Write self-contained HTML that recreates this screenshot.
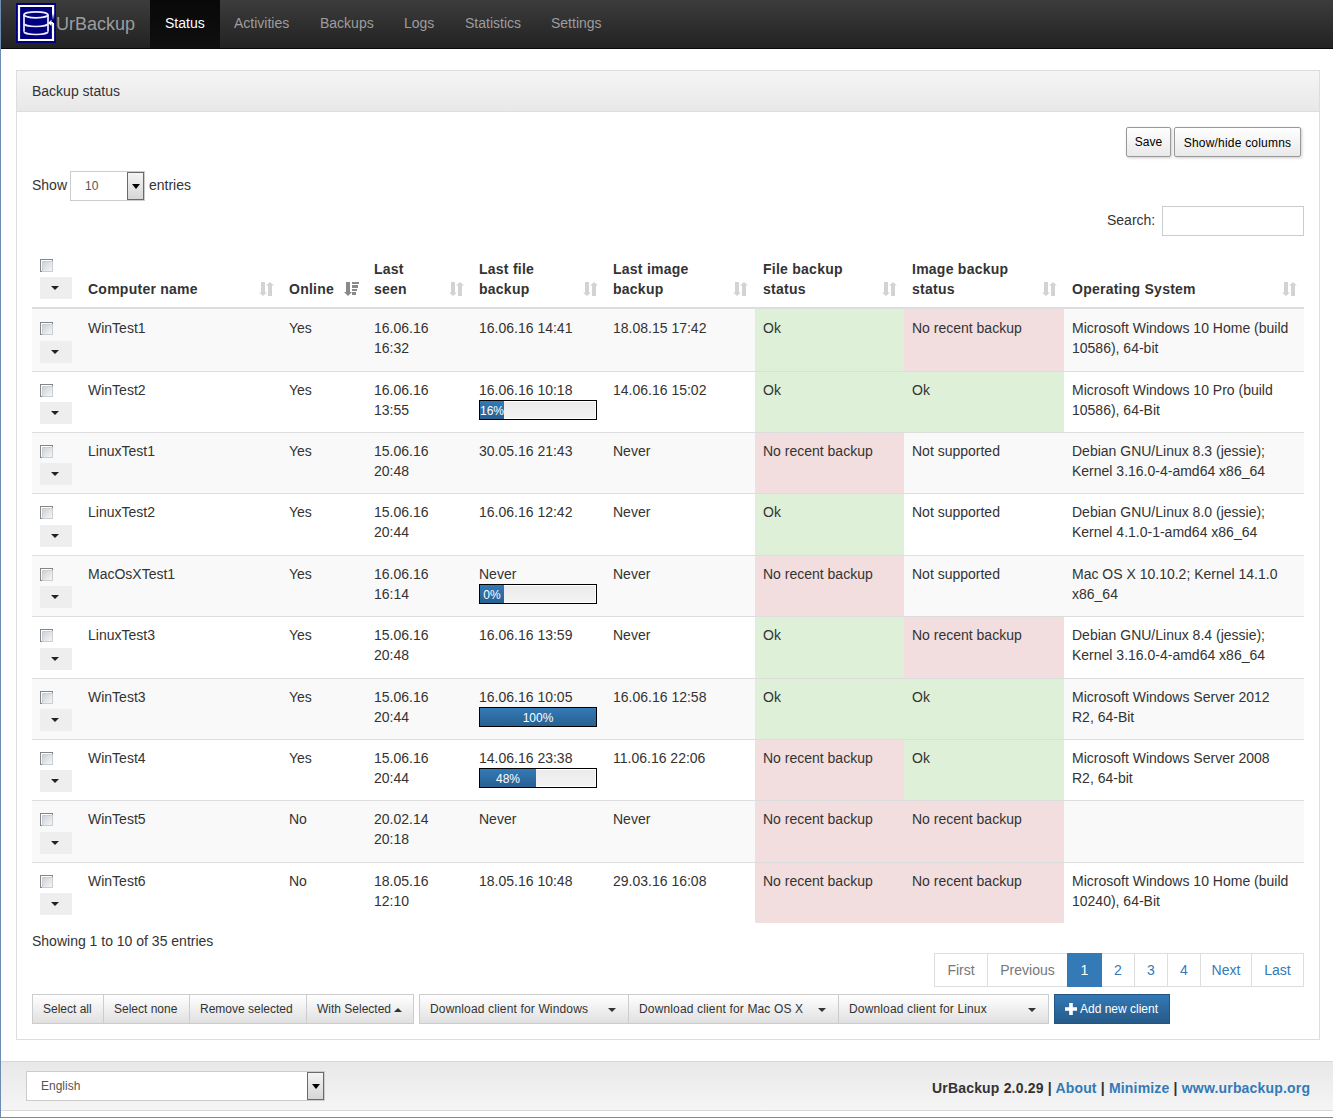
<!DOCTYPE html><html><head><meta charset="utf-8"><title>UrBackup</title><style>
*{box-sizing:border-box}
html,body{margin:0;padding:0}
body{width:1333px;height:1118px;position:relative;overflow:hidden;background:#fff;font-family:"Liberation Sans",sans-serif;font-size:14px;line-height:20px;color:#333}
.a{position:absolute;white-space:nowrap}
#lb{position:absolute;left:0;top:0;width:1px;height:1118px;background:#6b8cb3;z-index:50}
#bb{position:absolute;left:0;top:1117px;width:1333px;height:1px;background:#6b8cb3;z-index:50}
#nav{position:absolute;left:0;top:0;width:1333px;height:49px;background:linear-gradient(#3c3c3c,#222);border-bottom:1px solid #080808}
#nav .brand{position:absolute;left:56px;top:1px;height:48px;line-height:47px;font-size:18px;color:#9d9d9d}
#nav .logo{position:absolute;left:16px;top:3px;width:40px;height:40px}
#nav a{position:absolute;top:0;height:48px;line-height:46px;color:#9d9d9d;text-decoration:none;font-size:14px;padding:0 15px}
#nav a.act{background:linear-gradient(#080808,#0f0f0f);color:#fff}
#panel{position:absolute;left:16px;top:70px;width:1304px;height:970px;border:1px solid #ddd}
#ph{position:absolute;left:0;top:0;width:1302px;height:41px;background:linear-gradient(#f5f5f5,#e8e8e8);border-bottom:1px solid #ddd;padding:10px 15px}
.dtb{position:absolute;top:127px;height:30px;border:1px solid #999;border-radius:2px;background:linear-gradient(#fff,#e9e9e9);box-shadow:1px 1px 3px #ccc;font-size:12px;line-height:28px;text-align:center;color:#000}
.inp{position:absolute;border:1px solid #ccc;background:#fff}
.sel{position:absolute;border:1px solid #ccc;background:#fff;font-size:12px;color:#555}
.selbtn{position:absolute;top:0;right:0;width:17px;border:1px solid #6a6a6a;background:linear-gradient(#f4f4f4,#d6d6d6)}
.selbtn:after{content:"";position:absolute;left:3.5px;top:11px;border-top:5px solid #000;border-left:4px solid transparent;border-right:4px solid transparent}
.th{position:absolute;font-weight:bold;color:#333;letter-spacing:0.25px}
.row{position:absolute;left:32px;width:1272px}
.cb{position:absolute;width:13px;height:13px;border:1px solid #858585;background:#fff}
.cb:after{content:"";position:absolute;left:1px;top:1px;width:9px;height:9px;border:1px solid #c9ced3;background:linear-gradient(135deg,#cdd3d9,#f6f6f6)}
.ddb{position:absolute;width:32px;height:22px;background:#eeeeee}
.ddb:after{content:"";position:absolute;left:11px;top:9px;border-top:4px solid #222;border-left:4px solid transparent;border-right:4px solid transparent}
.sep{position:absolute;left:32px;width:1272px;height:1px;background:#ddd}
.ok{background:#dff0d8}
.bad{background:#f2dede}
.pb{position:absolute;width:118px;height:20px;border:1px solid #000;background:linear-gradient(#ebebeb,#f3f3f3);box-shadow:inset 0 0 0 1px #fff;overflow:hidden}
.pbf{position:absolute;left:0;top:0;height:18px;background:linear-gradient(#337ab7,#286090);color:#fff;font-size:12px;line-height:20px;text-align:center}
.pbtn{position:absolute;top:994px;height:30px;border:1px solid #ccc;background:linear-gradient(#fff,#e0e0e0);font-size:12px;line-height:28px;color:#333;padding:0 10px}
.car{display:inline-block;width:0;height:0;border-top:4px solid #333;border-left:4px solid transparent;border-right:4px solid transparent;vertical-align:middle}
.pg{position:absolute;top:953px;height:34px;border:1px solid #ddd;background:#fff;color:#337ab7;line-height:32px;text-align:center}
#footer{position:absolute;left:1px;top:1061px;width:1332px;height:50px;background:linear-gradient(#e8e8e8,#f5f5f5);border-top:1px solid #d8d8d8;border-bottom:1px solid #d8d8d8}
</style></head><body>
<div id="lb"></div><div id="bb"></div>
<div id="nav"><svg class="logo" width="40" height="40" viewBox="0 0 40 40"><defs><linearGradient id="fd" x1="0" y1="0" x2="0" y2="1"><stop offset="0" stop-color="#fff"/><stop offset="0.55" stop-color="#fff"/><stop offset="1" stop-color="#fff" stop-opacity="0"/></linearGradient></defs><rect x="0" y="0" width="40" height="40" fill="#00007e"/><path d="M37 19.9V37H3V3H37" fill="none" stroke="#fff" stroke-width="2.2"/><rect x="36" y="2" width="2.2" height="15" fill="url(#fd)"/><g fill="none" stroke="#eef" stroke-width="1.7"><ellipse cx="20" cy="11.8" rx="12" ry="3"/><path d="M8 11.8V28.5M32 11.8V28.5"/><path d="M8 20.5A12 3 0 0 0 32 20.5M8 28.5A12 3 0 0 0 32 28.5"/></g><path d="M37 19.9H34" stroke="#fff" stroke-width="1.8"/><path d="M32 19.9L35.5 16.8V23Z" fill="#fff"/></svg><div class="brand">UrBackup</div>
<a class="act" style="left:150px">Status</a>
<a class="" style="left:219px">Activities</a>
<a class="" style="left:305px">Backups</a>
<a class="" style="left:389px">Logs</a>
<a class="" style="left:450px">Statistics</a>
<a class="" style="left:536px">Settings</a>
</div>
<div id="panel"><div id="ph">Backup status</div></div>
<div class="dtb" style="left:1126px;width:45px">Save</div>
<div class="dtb" style="left:1174px;width:127px;line-height:30px;letter-spacing:0.2px">Show/hide columns</div>
<div class="a" style="left:32px;top:175px">Show</div>
<div class="sel" style="left:70px;top:171px;width:75px;height:30px"><span class="a" style="left:14px;top:4px">10</span><div class="selbtn" style="height:28px"></div></div>
<div class="a" style="left:149px;top:175px">entries</div>
<div class="a" style="left:1107px;top:210px">Search:</div>
<div class="inp" style="left:1162px;top:206px;width:142px;height:30px"></div>
<div class="cb" style="left:40px;top:259px"></div><div class="ddb" style="left:40px;top:277px"></div>
<div class="th a" style="left:88px;top:279px">Computer name</div>
<svg class="a" style="left:259px;top:282px" width="15" height="14" viewBox="0 0 15 14"><g fill="#d3d3d3"><rect x="2" y="0" width="4" height="11"/><path d="M0 10.5H8L4 14Z"/><path d="M7 3.5H15L11 0Z"/><rect x="9" y="3" width="4" height="11"/></g></svg>
<div class="th a" style="left:289px;top:279px">Online</div>
<svg class="a" style="left:344px;top:282px" width="15" height="14" viewBox="0 0 15 14"><g fill="#8a8a8a"><rect x="2" y="0" width="4" height="10.5"/><path d="M0 10H8L4 14Z"/><rect x="8" y="0" width="7" height="2"/><rect x="8" y="3" width="6" height="3"/><rect x="8" y="7" width="5" height="2"/><rect x="8" y="10" width="4" height="3"/></g></svg>
<div class="th a" style="left:374px;top:259px">Last</div>
<div class="th a" style="left:374px;top:279px">seen</div>
<svg class="a" style="left:449px;top:282px" width="15" height="14" viewBox="0 0 15 14"><g fill="#d3d3d3"><rect x="2" y="0" width="4" height="11"/><path d="M0 10.5H8L4 14Z"/><path d="M7 3.5H15L11 0Z"/><rect x="9" y="3" width="4" height="11"/></g></svg>
<div class="th a" style="left:479px;top:259px">Last file</div>
<div class="th a" style="left:479px;top:279px">backup</div>
<svg class="a" style="left:583px;top:282px" width="15" height="14" viewBox="0 0 15 14"><g fill="#d3d3d3"><rect x="2" y="0" width="4" height="11"/><path d="M0 10.5H8L4 14Z"/><path d="M7 3.5H15L11 0Z"/><rect x="9" y="3" width="4" height="11"/></g></svg>
<div class="th a" style="left:613px;top:259px">Last image</div>
<div class="th a" style="left:613px;top:279px">backup</div>
<svg class="a" style="left:733px;top:282px" width="15" height="14" viewBox="0 0 15 14"><g fill="#d3d3d3"><rect x="2" y="0" width="4" height="11"/><path d="M0 10.5H8L4 14Z"/><path d="M7 3.5H15L11 0Z"/><rect x="9" y="3" width="4" height="11"/></g></svg>
<div class="th a" style="left:763px;top:259px">File backup</div>
<div class="th a" style="left:763px;top:279px">status</div>
<svg class="a" style="left:882px;top:282px" width="15" height="14" viewBox="0 0 15 14"><g fill="#d3d3d3"><rect x="2" y="0" width="4" height="11"/><path d="M0 10.5H8L4 14Z"/><path d="M7 3.5H15L11 0Z"/><rect x="9" y="3" width="4" height="11"/></g></svg>
<div class="th a" style="left:912px;top:259px">Image backup</div>
<div class="th a" style="left:912px;top:279px">status</div>
<svg class="a" style="left:1042px;top:282px" width="15" height="14" viewBox="0 0 15 14"><g fill="#d3d3d3"><rect x="2" y="0" width="4" height="11"/><path d="M0 10.5H8L4 14Z"/><path d="M7 3.5H15L11 0Z"/><rect x="9" y="3" width="4" height="11"/></g></svg>
<div class="th a" style="left:1072px;top:279px">Operating System</div>
<svg class="a" style="left:1282px;top:282px" width="15" height="14" viewBox="0 0 15 14"><g fill="#d3d3d3"><rect x="2" y="0" width="4" height="11"/><path d="M0 10.5H8L4 14Z"/><path d="M7 3.5H15L11 0Z"/><rect x="9" y="3" width="4" height="11"/></g></svg>
<div class="sep" style="top:307px;height:2px"></div>
<div class="a" style="left:32px;top:309px;width:1272px;height:62px;background:#f9f9f9"></div>
<div class="a ok" style="left:755px;top:309px;width:149px;height:62px"></div>
<div class="a bad" style="left:904px;top:309px;width:160px;height:62px"></div>
<div class="cb" style="left:40px;top:322px"></div><div class="ddb" style="left:40px;top:341px"></div>
<div class="a" style="left:88px;top:318px">WinTest1</div>
<div class="a" style="left:289px;top:318px">Yes</div>
<div class="a" style="left:374px;top:318px">16.06.16<br>16:32</div>
<div class="a" style="left:479px;top:318px">16.06.16 14:41</div>
<div class="a" style="left:613px;top:318px">18.08.15 17:42</div>
<div class="a" style="left:763px;top:318px">Ok</div>
<div class="a" style="left:912px;top:318px">No recent backup</div>
<div class="a" style="left:1072px;top:318px">Microsoft Windows 10 Home (build<br>10586), 64-bit</div>
<div class="a ok" style="left:755px;top:372px;width:149px;height:60px"></div>
<div class="a ok" style="left:904px;top:372px;width:160px;height:60px"></div>
<div class="sep" style="top:371px"></div>
<div class="cb" style="left:40px;top:384px"></div><div class="ddb" style="left:40px;top:402px"></div>
<div class="a" style="left:88px;top:380px">WinTest2</div>
<div class="a" style="left:289px;top:380px">Yes</div>
<div class="a" style="left:374px;top:380px">16.06.16<br>13:55</div>
<div class="a" style="left:479px;top:380px">16.06.16 10:18</div>
<div class="pb" style="left:479px;top:400px"><div class="pbf" style="width:24px">16%</div></div>
<div class="a" style="left:613px;top:380px">14.06.16 15:02</div>
<div class="a" style="left:763px;top:380px">Ok</div>
<div class="a" style="left:912px;top:380px">Ok</div>
<div class="a" style="left:1072px;top:380px">Microsoft Windows 10 Pro (build<br>10586), 64-Bit</div>
<div class="a" style="left:32px;top:433px;width:1272px;height:60px;background:#f9f9f9"></div>
<div class="a bad" style="left:755px;top:433px;width:149px;height:60px"></div>
<div class="sep" style="top:432px"></div>
<div class="cb" style="left:40px;top:445px"></div><div class="ddb" style="left:40px;top:463px"></div>
<div class="a" style="left:88px;top:441px">LinuxTest1</div>
<div class="a" style="left:289px;top:441px">Yes</div>
<div class="a" style="left:374px;top:441px">15.06.16<br>20:48</div>
<div class="a" style="left:479px;top:441px">30.05.16 21:43</div>
<div class="a" style="left:613px;top:441px">Never</div>
<div class="a" style="left:763px;top:441px">No recent backup</div>
<div class="a" style="left:912px;top:441px">Not supported</div>
<div class="a" style="left:1072px;top:441px">Debian GNU/Linux 8.3 (jessie);<br>Kernel 3.16.0-4-amd64 x86_64</div>
<div class="a ok" style="left:755px;top:494px;width:149px;height:61px"></div>
<div class="sep" style="top:493px"></div>
<div class="cb" style="left:40px;top:506px"></div><div class="ddb" style="left:40px;top:525px"></div>
<div class="a" style="left:88px;top:502px">LinuxTest2</div>
<div class="a" style="left:289px;top:502px">Yes</div>
<div class="a" style="left:374px;top:502px">15.06.16<br>20:44</div>
<div class="a" style="left:479px;top:502px">16.06.16 12:42</div>
<div class="a" style="left:613px;top:502px">Never</div>
<div class="a" style="left:763px;top:502px">Ok</div>
<div class="a" style="left:912px;top:502px">Not supported</div>
<div class="a" style="left:1072px;top:502px">Debian GNU/Linux 8.0 (jessie);<br>Kernel 4.1.0-1-amd64 x86_64</div>
<div class="a" style="left:32px;top:556px;width:1272px;height:60px;background:#f9f9f9"></div>
<div class="a bad" style="left:755px;top:556px;width:149px;height:60px"></div>
<div class="sep" style="top:555px"></div>
<div class="cb" style="left:40px;top:568px"></div><div class="ddb" style="left:40px;top:586px"></div>
<div class="a" style="left:88px;top:564px">MacOsXTest1</div>
<div class="a" style="left:289px;top:564px">Yes</div>
<div class="a" style="left:374px;top:564px">16.06.16<br>16:14</div>
<div class="a" style="left:479px;top:564px">Never</div>
<div class="pb" style="left:479px;top:584px"><div class="pbf" style="width:24px">0%</div></div>
<div class="a" style="left:613px;top:564px">Never</div>
<div class="a" style="left:763px;top:564px">No recent backup</div>
<div class="a" style="left:912px;top:564px">Not supported</div>
<div class="a" style="left:1072px;top:564px">Mac OS X 10.10.2; Kernel 14.1.0<br>x86_64</div>
<div class="a ok" style="left:755px;top:617px;width:149px;height:61px"></div>
<div class="a bad" style="left:904px;top:617px;width:160px;height:61px"></div>
<div class="sep" style="top:616px"></div>
<div class="cb" style="left:40px;top:629px"></div><div class="ddb" style="left:40px;top:648px"></div>
<div class="a" style="left:88px;top:625px">LinuxTest3</div>
<div class="a" style="left:289px;top:625px">Yes</div>
<div class="a" style="left:374px;top:625px">15.06.16<br>20:48</div>
<div class="a" style="left:479px;top:625px">16.06.16 13:59</div>
<div class="a" style="left:613px;top:625px">Never</div>
<div class="a" style="left:763px;top:625px">Ok</div>
<div class="a" style="left:912px;top:625px">No recent backup</div>
<div class="a" style="left:1072px;top:625px">Debian GNU/Linux 8.4 (jessie);<br>Kernel 3.16.0-4-amd64 x86_64</div>
<div class="a" style="left:32px;top:679px;width:1272px;height:60px;background:#f9f9f9"></div>
<div class="a ok" style="left:755px;top:679px;width:149px;height:60px"></div>
<div class="a ok" style="left:904px;top:679px;width:160px;height:60px"></div>
<div class="sep" style="top:678px"></div>
<div class="cb" style="left:40px;top:691px"></div><div class="ddb" style="left:40px;top:709px"></div>
<div class="a" style="left:88px;top:687px">WinTest3</div>
<div class="a" style="left:289px;top:687px">Yes</div>
<div class="a" style="left:374px;top:687px">15.06.16<br>20:44</div>
<div class="a" style="left:479px;top:687px">16.06.16 10:05</div>
<div class="pb" style="left:479px;top:707px"><div class="pbf" style="width:116px">100%</div></div>
<div class="a" style="left:613px;top:687px">16.06.16 12:58</div>
<div class="a" style="left:763px;top:687px">Ok</div>
<div class="a" style="left:912px;top:687px">Ok</div>
<div class="a" style="left:1072px;top:687px">Microsoft Windows Server 2012<br>R2, 64-Bit</div>
<div class="a bad" style="left:755px;top:740px;width:149px;height:60px"></div>
<div class="a ok" style="left:904px;top:740px;width:160px;height:60px"></div>
<div class="sep" style="top:739px"></div>
<div class="cb" style="left:40px;top:752px"></div><div class="ddb" style="left:40px;top:770px"></div>
<div class="a" style="left:88px;top:748px">WinTest4</div>
<div class="a" style="left:289px;top:748px">Yes</div>
<div class="a" style="left:374px;top:748px">15.06.16<br>20:44</div>
<div class="a" style="left:479px;top:748px">14.06.16 23:38</div>
<div class="pb" style="left:479px;top:768px"><div class="pbf" style="width:56px">48%</div></div>
<div class="a" style="left:613px;top:748px">11.06.16 22:06</div>
<div class="a" style="left:763px;top:748px">No recent backup</div>
<div class="a" style="left:912px;top:748px">Ok</div>
<div class="a" style="left:1072px;top:748px">Microsoft Windows Server 2008<br>R2, 64-bit</div>
<div class="a" style="left:32px;top:801px;width:1272px;height:61px;background:#f9f9f9"></div>
<div class="a bad" style="left:755px;top:801px;width:149px;height:61px"></div>
<div class="a bad" style="left:904px;top:801px;width:160px;height:61px"></div>
<div class="sep" style="top:800px"></div>
<div class="cb" style="left:40px;top:813px"></div><div class="ddb" style="left:40px;top:832px"></div>
<div class="a" style="left:88px;top:809px">WinTest5</div>
<div class="a" style="left:289px;top:809px">No</div>
<div class="a" style="left:374px;top:809px">20.02.14<br>20:18</div>
<div class="a" style="left:479px;top:809px">Never</div>
<div class="a" style="left:613px;top:809px">Never</div>
<div class="a" style="left:763px;top:809px">No recent backup</div>
<div class="a" style="left:912px;top:809px">No recent backup</div>
<div class="a" style="left:1072px;top:809px"><br></div>
<div class="a bad" style="left:755px;top:863px;width:149px;height:60px"></div>
<div class="a bad" style="left:904px;top:863px;width:160px;height:60px"></div>
<div class="sep" style="top:862px"></div>
<div class="cb" style="left:40px;top:875px"></div><div class="ddb" style="left:40px;top:893px"></div>
<div class="a" style="left:88px;top:871px">WinTest6</div>
<div class="a" style="left:289px;top:871px">No</div>
<div class="a" style="left:374px;top:871px">18.05.16<br>12:10</div>
<div class="a" style="left:479px;top:871px">18.05.16 10:48</div>
<div class="a" style="left:613px;top:871px">29.03.16 16:08</div>
<div class="a" style="left:763px;top:871px">No recent backup</div>
<div class="a" style="left:912px;top:871px">No recent backup</div>
<div class="a" style="left:1072px;top:871px">Microsoft Windows 10 Home (build<br>10240), 64-Bit</div>
<div class="a" style="left:32px;top:931px">Showing 1 to 10 of 35 entries</div>
<div class="pg" style="left:934px;width:54px;color:#777">First</div>
<div class="pg" style="left:987px;width:81px;color:#777">Previous</div>
<div class="pg" style="left:1067px;width:35px;background:#337ab7;border-color:#337ab7;color:#fff;z-index:2">1</div>
<div class="pg" style="left:1101px;width:34px;color:#337ab7">2</div>
<div class="pg" style="left:1134px;width:34px;color:#337ab7">3</div>
<div class="pg" style="left:1167px;width:34px;color:#337ab7">4</div>
<div class="pg" style="left:1200px;width:52px;color:#337ab7">Next</div>
<div class="pg" style="left:1251px;width:53px;color:#337ab7">Last</div>
<div class="pbtn" style="left:32px;width:72px">Select all</div>
<div class="pbtn" style="left:103px;width:87px">Select none</div>
<div class="pbtn" style="left:189px;width:118px">Remove selected</div>
<div class="pbtn" style="left:306px;width:108px">With Selected <span class="car" style="border-top:0;border-bottom:4px solid #333"></span></div>
<div class="pbtn" style="left:419px;width:210px;letter-spacing:0.15px">Download client for Windows<span class="car" style="position:absolute;right:12px;top:13px"></span></div>
<div class="pbtn" style="left:628px;width:211px;letter-spacing:0.15px">Download client for Mac OS X<span class="car" style="position:absolute;right:12px;top:13px"></span></div>
<div class="pbtn" style="left:838px;width:211px;letter-spacing:0.15px">Download client for Linux<span class="car" style="position:absolute;right:12px;top:13px"></span></div>
<div class="pbtn" style="left:1054px;width:116px;background:linear-gradient(#337ab7,#265a88);border-color:#245580;color:#fff"><svg style="position:absolute;left:10px;top:8px" width="12" height="12" viewBox="0 0 12 12"><path d="M4.2 0H7.8V4.2H12V7.8H7.8V12H4.2V7.8H0V4.2H4.2Z" fill="#fff"/></svg><span style="position:absolute;left:25px;top:0">Add new client</span></div>
<div id="footer"></div>
<div class="sel" style="left:26px;top:1071px;width:299px;height:30px"><span class="a" style="left:14px;top:4px">English</span><div class="selbtn" style="height:28px"></div></div>
<div class="a" style="left:932px;top:1078px;font-weight:bold;letter-spacing:0.18px"><span style="color:#333">UrBackup 2.0.29</span> | <span style="color:#337ab7">About</span> | <span style="color:#337ab7">Minimize</span> | <span style="color:#337ab7">www.urbackup.org</span></div>
</body></html>
